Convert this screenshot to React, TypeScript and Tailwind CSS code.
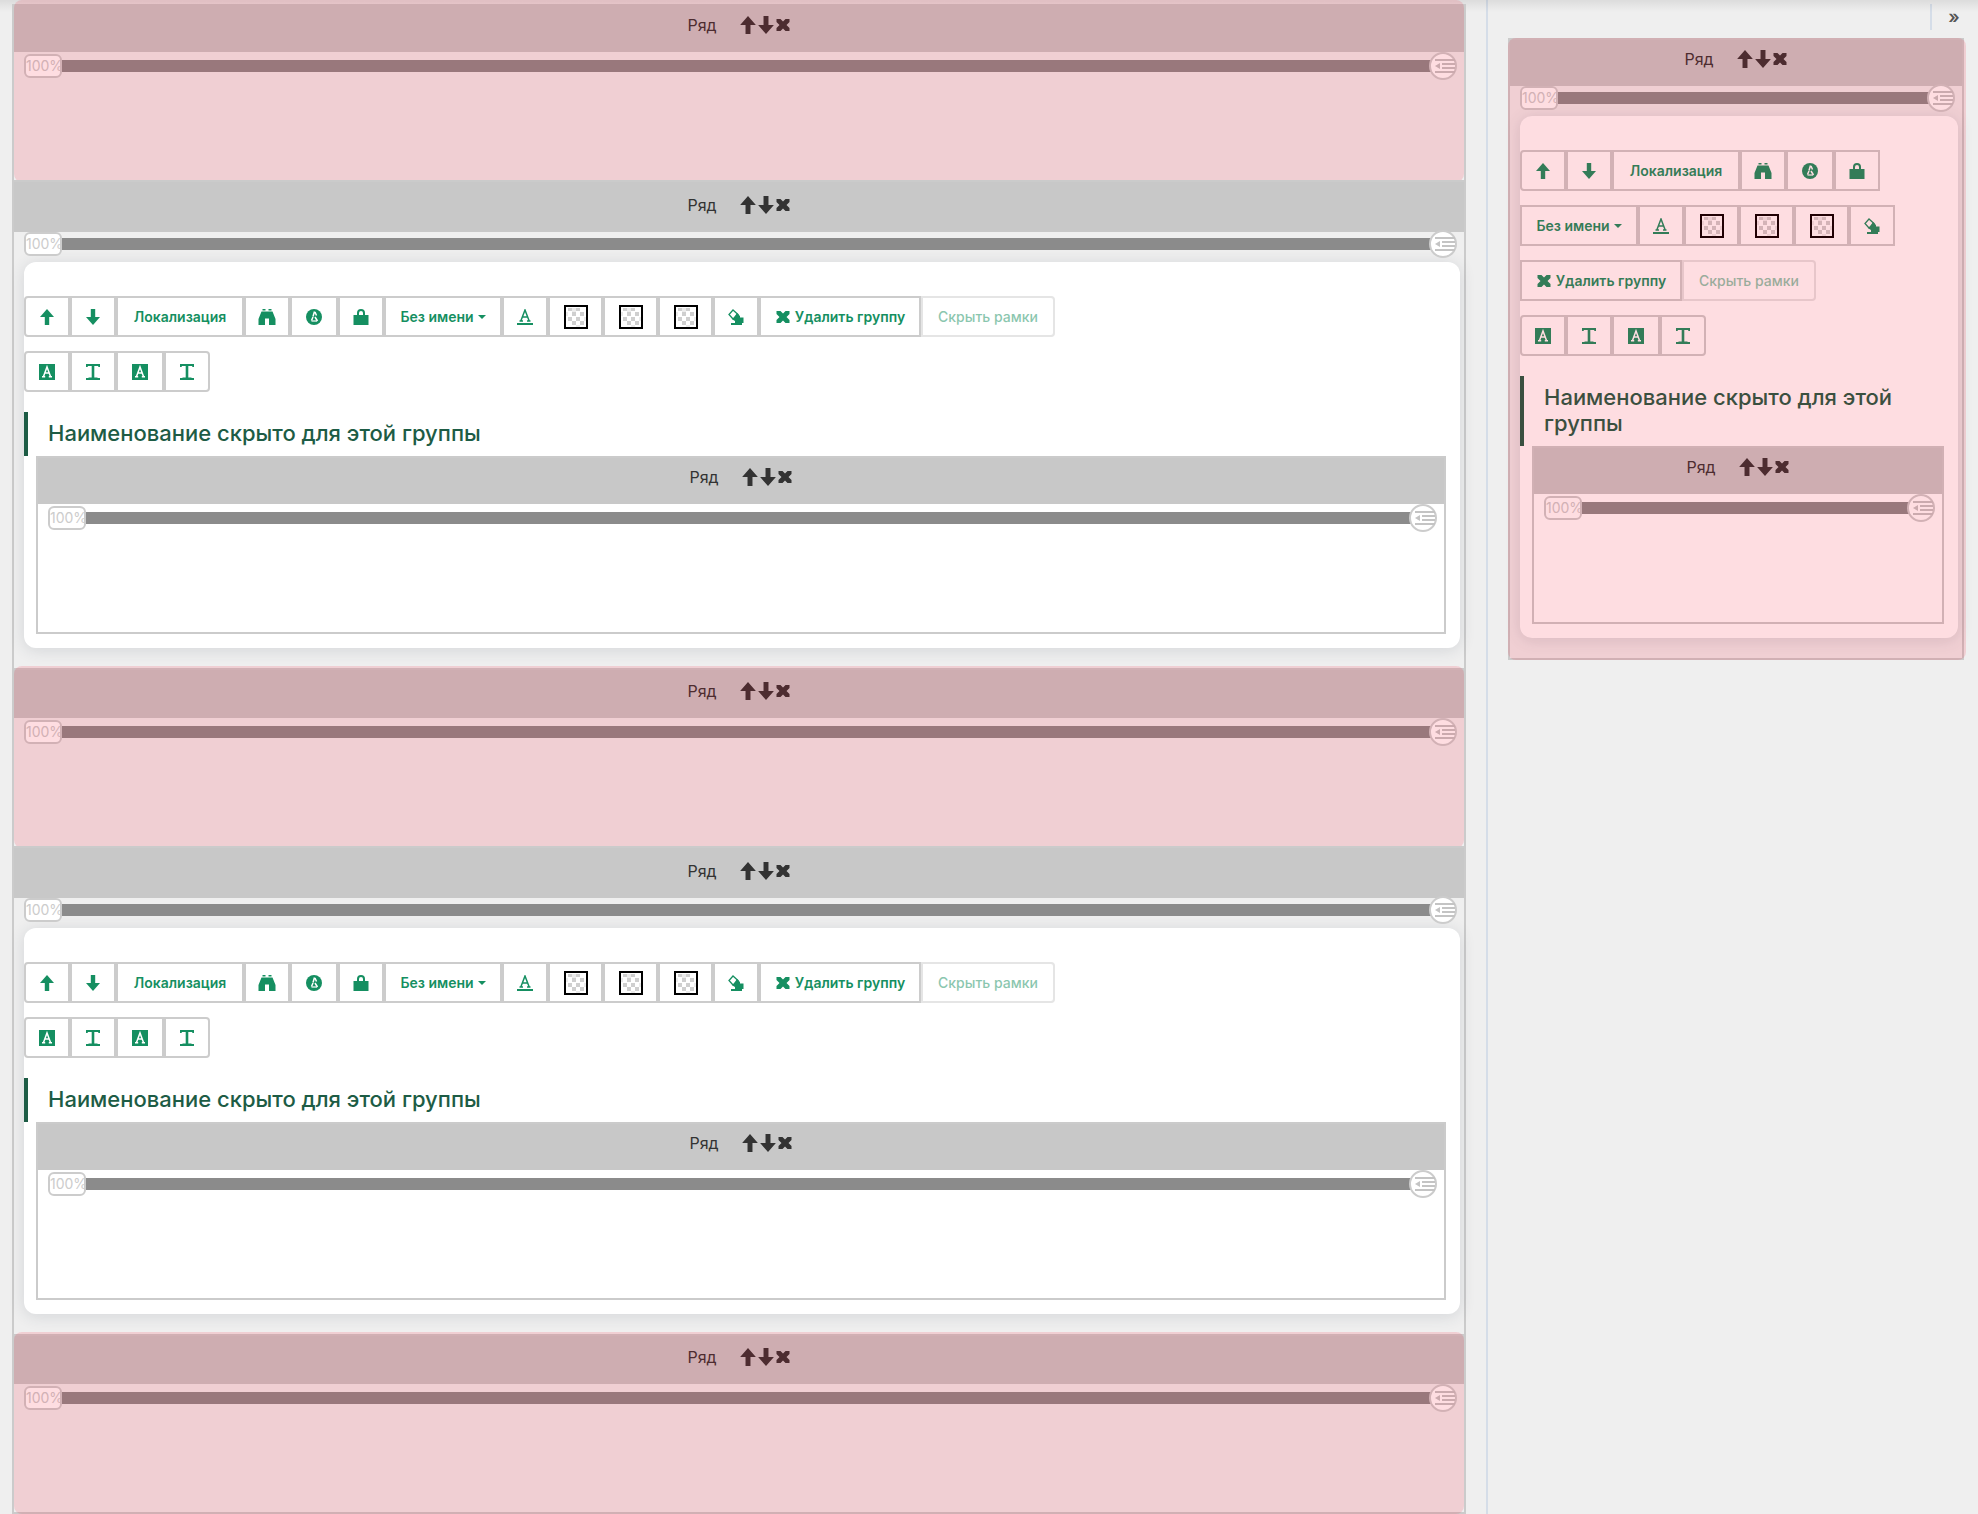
import clsx from 'clsx'
import type { ReactNode } from 'react'

type IconProps = { className?: string }

function ArrowUp({ className }: IconProps) {
  return (
    <svg viewBox="0 0 16 16" fill="currentColor" className={className} aria-hidden="true">
      <path d="M8 0 15 8H10.2V16H5.8V8H1z" />
    </svg>
  )
}

function ArrowDown({ className }: IconProps) {
  return (
    <svg viewBox="0 0 16 16" fill="currentColor" className={className} aria-hidden="true">
      <path d="M8 16 1 8H5.8V0H10.2V8H15z" />
    </svg>
  )
}

function Cross({ className }: IconProps) {
  return (
    <svg viewBox="0 0 16 16" fill="currentColor" className={className} aria-hidden="true">
      <path d="M1.500 2H5.500L8 4.500 10.500 2H14.500V5L11.500 8 14.500 11V14H10.500L8 11.500 5.500 14H1.500V11L4.500 8 1.500 5z" />
    </svg>
  )
}

function Binoculars({ className }: IconProps) {
  return (
    <svg viewBox="0 0 18 16" fill="currentColor" className={className} aria-hidden="true">
      <path d="M4.500 0H7.500V1.500H4.500zM10.500 0H13.500V1.500H10.500zM3.500 2.500H14.500L17.500 10V16H11V9.500H7V16H0.500V10z" />
    </svg>
  )
}

function Compass({ className }: IconProps) {
  return (
    <svg viewBox="0 0 16 16" className={className} aria-hidden="true">
      <circle cx="8" cy="8" r="8" fill="currentColor" />
      <path d="M8.500 2.500 7 7.500M9 3 10.500 6.500M7 8 5.500 11.500M9 8 11.500 12" fill="none" stroke="#ffffff" strokeWidth="1.500" />
      <path d="M5.500 11H11V13H5.500z" fill="#ffffff" fillOpacity="0.600" />
    </svg>
  )
}

function Lock({ className }: IconProps) {
  return (
    <svg viewBox="0 0 16 16" fill="currentColor" fillRule="evenodd" className={className} aria-hidden="true">
      <path d="M8 0a4 4 0 0 1 4 4V6H15.500V16H0.500V6H4V4A4 4 0 0 1 8 0zM8 2A2 2 0 0 0 6 4V6H10V4A2 2 0 0 0 8 2z" />
    </svg>
  )
}

function TextColor({ className }: IconProps) {
  return (
    <svg viewBox="0 0 16 16" className={className} aria-hidden="true">
      <path d="M4 11.500 8 1 12 11.500M5.500 8H10.500M2.500 12H6M10 12H13.500" fill="none" stroke="currentColor" strokeWidth="1.500" />
      <path d="M0 14H16V16H0z" fill="currentColor" />
    </svg>
  )
}

function Bucket({ className }: IconProps) {
  return (
    <svg viewBox="0 0 18 16" className={className} aria-hidden="true">
      <path d="M6 1 2 5.500 6 10 11 5.500z" fill="none" stroke="currentColor" strokeWidth="1.300" />
      <path d="M10 4 13 7V8.500H16.500V14H15V16H4V14H8V12L5.500 10.500z" fill="currentColor" />
    </svg>
  )
}

function TextBackground({ className }: IconProps) {
  return (
    <svg viewBox="0 0 16 16" className={className} aria-hidden="true">
      <path d="M0 0H16V16H0z" fill="currentColor" />
      <path d="M4.500 12.500 8 3 11.500 12.500M6 9H10M3 12.700H6.200M9.800 12.700H13" fill="none" stroke="#ffffff" strokeWidth="1.500" />
    </svg>
  )
}

function TextSize({ className }: IconProps) {
  return (
    <svg viewBox="0 0 16 16" fill="currentColor" className={className} aria-hidden="true">
      <path d="M1 0H15V3H13.500L13 2H9.300V13.500H12L13 14H15V16H1V14H3L4 13.500H6.700V2H3L2.500 3H1z" />
    </svg>
  )
}

function Indent({ className }: IconProps) {
  return (
    <svg viewBox="0 0 20 14" className={className} aria-hidden="true">
      <path d="M0 1H20M7 5H20M7 9H20M0 13H20" stroke="currentColor" strokeWidth="2" />
      <path d="M0 7 5 4V10z" fill="currentColor" />
    </svg>
  )
}

function Checker() {
  return (
    <span className="block size-6 border-2 border-black bg-white">
      <svg viewBox="0 0 20 20" className="size-5" aria-hidden="true">
        <path
          d="M2 1H6V4H2zM10 1H14V4H10zM6 5H10V9H6zM14 5H18V9H14zM2 10H6V14H2zM10 10H14V14H10zM6 14H10V18H6zM14 14H18V18H14z"
          fill="#cfcfcf"
        />
        <path d="M6 1H10V5H6zM0 5H2V9H0zM18 10H20V14H18zM10 18H14V20H10z" fill="#ececec" />
      </svg>
    </span>
  )
}

type ToolProps = {
  label?: string
  className?: string
  disabled?: boolean
  children: ReactNode
}

function Tool({ label, className = 'w-[46px]', disabled, children }: ToolProps) {
  return (
    <button
      type="button"
      aria-label={label}
      disabled={disabled}
      className={clsx(
        'flex h-[41px] flex-none items-center justify-center gap-1 border-2 border-[#cccccc] text-sm font-semibold whitespace-nowrap text-[#158f61] disabled:font-medium disabled:opacity-50',
        className
      )}
    >
      {children}
    </button>
  )
}

function GroupTools() {
  return (
    <div className="flex flex-col gap-[14px]">
      <div className="flex flex-wrap gap-y-[14px]">
        <Tool label="Вверх" className="w-[46px] rounded-l-sm"><ArrowUp className="size-4" /></Tool>
        <Tool label="Вниз"><ArrowDown className="size-4" /></Tool>
        <Tool className="w-32">Локализация</Tool>
        <Tool label="Просмотр"><Binoculars className="h-4 w-[18px]" /></Tool>
        <Tool label="Цвет" className="w-12"><Compass className="size-4" /></Tool>
        <Tool label="Блокировка"><Lock className="size-4" /></Tool>
        <Tool className="w-[118px]">
          Без имени
          <span className="border-x-4 border-t-4 border-x-transparent border-t-current" />
        </Tool>
        <Tool label="Цвет текста"><TextColor className="size-4" /></Tool>
        <Tool label="Фон" className="w-[55px]"><Checker /></Tool>
        <Tool label="Рамка" className="w-[55px]"><Checker /></Tool>
        <Tool label="Заливка" className="w-[55px]"><Checker /></Tool>
        <Tool label="Очистить"><Bucket className="h-4 w-[18px]" /></Tool>
        <Tool className="w-[162px]">
          <Cross className="size-4" />
          Удалить группу
        </Tool>
        <Tool disabled className="w-[134px] rounded-r-sm">Скрыть рамки</Tool>
      </div>
      <div className="flex flex-wrap">
        <Tool label="Фон заголовка" className="w-[46px] rounded-l-sm"><TextBackground className="size-4" /></Tool>
        <Tool label="Размер заголовка"><TextSize className="size-4" /></Tool>
        <Tool label="Фон текста" className="w-12"><TextBackground className="size-4" /></Tool>
        <Tool label="Размер текста" className="w-[46px] rounded-r-sm"><TextSize className="size-4" /></Tool>
      </div>
    </div>
  )
}

function WidthSlider() {
  return (
    <div className="mr-[7px] ml-[10px] flex h-3 items-center">
      <button
        type="button"
        className="relative flex h-6 w-[38px] flex-none items-center rounded-md border-2 border-[#cccccc] bg-white text-sm text-[#cccccc]"
      >
        100%
      </button>
      <div className="h-3 flex-1 bg-[#8b8b8b]" />
      <button
        type="button"
        aria-label="Отступ"
        className="-ml-1 flex size-7 flex-none items-center justify-end rounded-full border-2 border-[#cccccc] bg-white text-[#c4c4c4]"
      >
        <Indent className="h-[14px] w-5" />
      </button>
    </div>
  )
}

const headerStyles = {
  empty: 'pt-3 pb-[18px] mb-2',
  filled: 'pt-[14px] pb-[18px] mb-[6px]',
  nested: 'pt-[10px] pb-[18px] mb-2',
  side: 'pt-[10px] pb-[18px] mb-[6px]',
}

type RowProps = {
  kind: keyof typeof headerStyles
  className?: string
  children?: ReactNode
}

function Row({ kind, className, children }: RowProps) {
  return (
    <section className={clsx('relative border-2 border-[#cbcbcb]', className)}>
      <header className={clsx('flex justify-center bg-[#c8c8c8] text-[#333333]', headerStyles[kind])}>
        <span className="mr-[22px] text-base leading-[18px]">Ряд</span>
        <button type="button" aria-label="Поднять ряд"><ArrowUp className="size-[18px]" /></button>
        <button type="button" aria-label="Опустить ряд"><ArrowDown className="size-[18px]" /></button>
        <button type="button" aria-label="Удалить ряд"><Cross className="size-4" /></button>
      </header>
      <WidthSlider />
      {children}
    </section>
  )
}

function HiddenOverlay({ className }: { className: string }) {
  return <div className={clsx('pointer-events-none absolute rounded-lg bg-[#f6001c]/[0.133]', className)} />
}

function EmptyRow({ className = 'h-[180px]' }: { className?: string }) {
  return (
    <Row kind="empty" className={className}>
      <HiddenOverlay className="inset-x-0 -top-1 -bottom-[2px]" />
    </Row>
  )
}

function GroupCard() {
  return (
    <div className="mt-3 mr-1 mb-5 ml-[10px] rounded-xl bg-white pt-[34px] pb-[14px] shadow-[0_2px_16px_rgba(40,60,80,0.14)]">
      <GroupTools />
      <h2 className="mt-5 border-l-4 border-[#1d5c45] pt-2 pr-5 pb-[10px] pl-5 text-[22px] leading-[26px] font-medium text-[#1d5c45]">
        Наименование скрыто для этой группы
      </h2>
      <Row kind="nested" className="mr-[14px] ml-3 h-[178px]" />
    </div>
  )
}

export default function App() {
  return (
    <div className="relative flex min-h-screen bg-[#efefef] font-['Inter','Roboto','Liberation_Sans',sans-serif]">
      <div className="pointer-events-none absolute inset-x-0 top-0 h-3 bg-linear-to-b from-black/8 to-transparent" />
      <main className="flex flex-1 flex-col -space-y-[2px] border-r-2 border-[#d5dde8] pt-1 pr-5 pl-3">
        <EmptyRow className="h-[178px] border-t-0" />
        <Row kind="filled"><GroupCard /></Row>
        <EmptyRow />
        <Row kind="filled"><GroupCard /></Row>
        <EmptyRow />
      </main>
      <aside className="w-[490px] flex-none pr-[14px] pl-5">
        <div className="flex h-[38px] justify-end pt-1 pb-2">
          <button type="button" aria-label="Свернуть панель" className="w-[34px] border-l-2 border-[#d5dde8] pl-3 text-lg leading-6 font-semibold text-[#555555]">
            »
          </button>
        </div>
        <Row kind="side">
          <GroupCard />
          <HiddenOverlay className="-top-[2px] -right-1 -bottom-[2px] -left-[2px]" />
        </Row>
      </aside>
    </div>
  )
}
